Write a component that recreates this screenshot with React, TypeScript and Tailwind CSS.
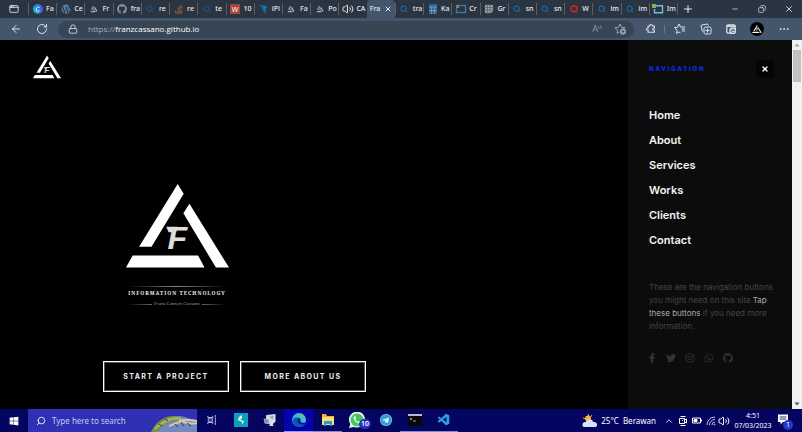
import React, { ReactNode } from "react";
import {
  FaFacebookF, FaGithub, FaInstagram, FaStackOverflow, FaTelegram, FaTwitter,
  FaWhatsapp, FaWindows, FaWordpress,
} from "react-icons/fa";
import { VscVscode } from "react-icons/vsc";
import {
  AppWindow, ArrowLeft, ChevronUp, Copy, Lock, Minus,
  MoreHorizontal, Plus, RotateCw, Search, Volume2, X,
} from "lucide-react";

const ui = "font-['Noto_Sans','Open_Sans',sans-serif]";

function Mark({ className }: { className: string }) {
  return (
    <svg viewBox="108 43 307 250" className={className} fill="#fff" aria-hidden="true">
      <polygon points="262,43 280,72 184,230 147,230" />
      <polygon points="297,102 415,292 376,292 279,130" />
      <polygon points="128,256 323,256 342,292 108,292" />
      <g fill="#ddd">
        <path d="M228 170h34l-5 17h-22z" />
        <text x="232" y="238" fontFamily="Liberation Sans, sans-serif" fontSize="96" fontWeight="bold" fontStyle="italic">F</text>
      </g>
    </svg>
  );
}

function Triangle() {
  return (
    <svg viewBox="0 0 10 10" className="size-2" fill="none" stroke="#a9b1b9" strokeWidth="1.5">
      <path d="M4.5 1.5 2 6M5.8 3l3 5.2M1 8.3h6M5 4.8v2" />
    </svg>
  );
}

const search = <Search className="size-2 text-[#0b78c8]" strokeWidth={3} />;
const dimSearch = <Search className="size-2 text-[#135a94]" strokeWidth={3} />;
const frame = (
  <svg viewBox="0 0 12 10" className="h-2.5 w-3" fill="none" stroke="#3f769c">
    <path d="M3.5 1.5h7v7h-9V4" strokeWidth="1.4" />
    <path d="M1 1h3v3H1z" fill="#8a8058" stroke="none" />
  </svg>
);

const tabs: { icon: ReactNode; title: string }[] = [
  {
    icon: (
      <svg viewBox="0 0 10 10" className="size-2.5">
        <defs>
          <linearGradient id="canva" x1="0" y1="0.6" x2="1" y2="0.3">
            <stop offset="0" stopColor="#12bcd5" /><stop offset=".55" stopColor="#247ee8" /><stop offset="1" stopColor="#7636e4" />
          </linearGradient>
        </defs>
        <circle cx="5" cy="5" r="5" fill="url(#canva)" />
        <path d="M6.6 3.5C5.8 1.9 3.2 3.6 3.3 6c.1 2 2.4 1.8 3.3.4" fill="none" stroke="#fff" />
      </svg>
    ),
    title: "Fa",
  },
  { icon: <FaWordpress className="size-2.5 text-[#5289ad]" />, title: "Ce" },
  { icon: <Triangle />, title: "Fr" },
  { icon: <FaGithub className="size-2.5 text-[#8d969f]" />, title: "fra" },
  { icon: dimSearch, title: "re" },
  { icon: <FaStackOverflow className="size-2.5 text-[#98613b]" />, title: "re" },
  { icon: dimSearch, title: "te" },
  { icon: <span className="flex size-2.5 items-center justify-center bg-[#a94440] text-[7px] leading-none text-white">W</span>, title: "10" },
  {
    icon: (
      <svg viewBox="0 0 10 10" className="size-2.5" fill="#1672b0">
        <path d="M0 1.200 7 1.500 10 4 7.800 4.500 7.700 9.500 4.600 6.500 5.500 4.600 2.500 4.200 5 3.300z" />
      </svg>
    ),
    title: "iPi",
  },
  { icon: <Triangle />, title: "Fa" },
  { icon: <Triangle />, title: "Po" },
  { icon: <Volume2 className="size-3 text-[#dde2e7]" />, title: "CA" },
  { icon: null, title: "Fra" },
  { icon: search, title: "tra" },
  {
    icon: (
      <svg viewBox="0 0 10 10" className="size-2.5">
        <path d="M1 0h8v10H1z" fill="#2f6594" />
        <path d="M1 3h8M1 6.500h8M3.500 3v7M6.500 3v7" stroke="#86a9c4" strokeWidth=".7" />
      </svg>
    ),
    title: "Ka",
  },
  { icon: frame, title: "Cr" },
  {
    icon: (
      <svg viewBox="0 0 10 10" className="size-2.5">
        <path d="M1 1h8v6L7 9H1z" fill="#9a9fa4" />
        <path d="M0 3.500h10M0 6.200h10M3.500 0v10M6.200 0v10" stroke="#59636e" strokeWidth=".8" />
      </svg>
    ),
    title: "Gr",
  },
  { icon: search, title: "sn" },
  { icon: search, title: "sn" },
  {
    icon: (
      <svg viewBox="0 0 10 10" className="size-2" fill="none" stroke="#cf2626" strokeWidth="1.800">
        <circle cx="5" cy="4.800" r="3.800" /><path d="m6 7 2.500 2.500" />
      </svg>
    ),
    title: "W",
  },
  { icon: search, title: "im" },
  { icon: search, title: "im" },
  {
    icon: (
      <svg viewBox="0 0 12 10" className="h-2.5 w-3" fill="none">
        <path d="M4 1.700h6.500v7h-8V5" stroke="#72bde0" strokeWidth="1.400" />
        <path d="M0 0h4v4H0z" fill="#90a950" />
      </svg>
    ),
    title: "Im",
  },
];

function TabStrip() {
  return (
    <div className="flex h-[18px] items-stretch bg-[#2b3542] text-[#e8ebee]">
      <button aria-label="Tab actions" className="flex w-7 items-center justify-center">
        <AppWindow className="size-2.5" />
      </button>
      <div className="flex min-w-0 flex-1" role="tablist">
        {tabs.map((tab, i) =>
          tab.icon === null ? (
            <div key={i} className="flex min-w-0 flex-1 basis-0 items-center justify-evenly rounded-t bg-[#44566c]">
              <button role="tab" aria-selected="true" className="text-[7px] leading-3 font-medium whitespace-nowrap">{tab.title}</button>
              <button aria-label="Close tab"><X className="size-2" strokeWidth={3} /></button>
            </div>
          ) : (
            <button key={i} role="tab" aria-selected="false" className="flex min-w-0 flex-1 basis-0 items-center">
              <span className="h-3 w-px shrink-0 bg-[#56606c]" />
              <span className="flex w-[17px] shrink-0 items-center justify-center">{tab.icon}</span>
              <span className="text-[7px] leading-3 font-medium whitespace-nowrap">{tab.title}</span>
            </button>
          ),
        )}
      </div>
      <div className="flex w-[125px] items-center">
        <span className="h-3 w-px bg-[#56606c]" />
        <button aria-label="New tab" className="ml-1"><Plus className="size-3" /></button>
        <button aria-label="Minimize" className="ml-auto flex w-[27px] justify-center"><Minus className="size-2" /></button>
        <button aria-label="Restore" className="flex w-[27px] justify-center"><Copy className="size-2 -scale-x-100" /></button>
        <button aria-label="Close" className="flex w-[27px] justify-center"><X className="size-2.5" /></button>
      </div>
    </div>
  );
}

function Toolbar() {
  return (
    <div className="flex h-[22px] items-center bg-[#44566c] text-[#dce2e8]">
      <button aria-label="Back" className="ml-2.5"><ArrowLeft className="size-3" /></button>
      <button aria-label="Reload" className="ml-3.5"><RotateCw className="size-3" /></button>
      <div className="ml-2.5 flex h-[17px] min-w-0 flex-1 items-center rounded-full bg-[#384555] pr-2 pl-2.5">
        <Lock className="size-2.5" />
        <label className="relative ml-2.5 flex h-full flex-1 items-center font-['Open_Sans',sans-serif] text-[8px] leading-3">
          <span className="text-[#a5aeb8]">https://</span>
          <span className="text-white">franzcassano.github.io</span>
          <input aria-label="Address" className="absolute inset-0 w-full bg-transparent outline-none" />
        </label>
        <button aria-label="Read aloud" className="flex items-start text-[9px] leading-3 text-[#8c97a3]">
          A
          <svg viewBox="0 0 5 6" className="mt-0.5 h-1.5 w-1" fill="none" stroke="currentColor"><path d="m.5 1 1 3M3 0l1 4" /></svg>
        </button>
        <button aria-label="Add to favorites" className="ml-3 text-[#98a2ad]">
          <svg viewBox="0 0 24 24" className="size-3" fill="none" stroke="currentColor" strokeWidth="2">
            <path d="m12 2-3 6.500-7 .8 5 5L6 21l5-3M12 2l3 6.500 7 .8-2 2" />
            <circle cx="18" cy="17" r="5.500" fill="currentColor" /><path d="M18 14.500v5M15.500 17h5" stroke="#384555" />
          </svg>
        </button>
      </div>
      <div className="flex w-[168px] items-center pl-3">
        <button aria-label="Extensions">
          <svg viewBox="0 0 24 24" className="size-2.5" fill="none" stroke="currentColor" strokeWidth="2.500">
            <path d="M5 5h4c-1-5 7-5 6 0h5v5c-5-1-5 6 0 5v5H5v-5c-5 1-5-6 0-5z" />
          </svg>
        </button>
        <span className="ml-2 h-2 w-px bg-[#6a7989]" />
        <button aria-label="Favorites" className="ml-[9px]">
          <svg viewBox="0 0 24 24" className="size-3" fill="none" stroke="currentColor" strokeWidth="2">
            <path d="m10 2-3 6.500-6 .8 5 5L5 21l5-3 3 1.500M10 2l3 6h9M15 12h7M16 16h6" />
          </svg>
        </button>
        <button aria-label="Collections" className="ml-3.5">
          <svg viewBox="0 0 24 24" className="size-3" fill="none" stroke="currentColor" strokeWidth="2">
            <rect x="8" y="8" width="14" height="14" rx="3" /><path d="M15 11v8M11 15h8M5 17 2 6l1-2 12-2 2 3" />
          </svg>
        </button>
        <button aria-label="Internet Explorer mode" className="ml-3.5">
          <svg viewBox="0 0 12 12" className="size-2.5" fill="none" stroke="currentColor">
            <rect x="1" y="1" width="10" height="10" rx="1.500" strokeWidth="1.500" /><path d="M1 2.500h10" strokeWidth="2" />
            <circle cx="8" cy="8" r="4" fill="currentColor" stroke="none" />
            <path d="M10.300 9.500C8 11.500 5.700 9.500 6 7.700c.5-2.500 4.300-2 4.300.3H6.500" stroke="#44566c" />
          </svg>
        </button>
        <button aria-label="Profile" className="ml-3.5 flex size-3.5 items-center justify-center rounded-full bg-black"><Mark className="h-2 w-2.5" /></button>
        <button aria-label="Settings and more" className="ml-3.5"><MoreHorizontal className="size-3" /></button>
      </div>
    </div>
  );
}

function Hero() {
  const button =
    "h-[31px] w-[126px] border border-white font-['Inter','Liberation_Sans',sans-serif] text-[7px] leading-3 font-bold tracking-[0.2em] text-[#eee] shadow-[inset_0_0_0_1px_#555]";
  return (
    <main className="min-w-0 flex-1 bg-black">
      <header className="pt-[15px] pl-[33px]">
        <a href="#home" aria-label="Home" className="block w-7"><Mark className="h-6 w-7" /></a>
      </header>
      <section className="mt-[105px] ml-[103px]">
        <div className="flex w-[148px] flex-col items-center">
          <Mark className="h-[84px] w-[103px]" />
          <span className="mt-[18px] h-px w-[98px] bg-linear-to-r from-transparent via-[#888] to-transparent" />
          <p className="mt-px font-['Noto_Serif','Liberation_Serif',serif] text-[5px] leading-[10px] font-bold tracking-[1px] whitespace-nowrap text-[#eee]">INFORMATION TECHNOLOGY</p>
          <div className="flex w-[98px] items-center gap-0.5">
            <span className="h-px flex-1 bg-linear-to-r from-transparent to-[#666]" />
            <p className="font-['Liberation_Serif',serif] text-[5px] leading-3 whitespace-nowrap text-[#999] italic">Franz Lennon Cassano</p>
            <span className="h-px flex-1 bg-linear-to-l from-transparent to-[#666]" />
          </div>
        </div>
        <div className="mt-[51px] flex gap-[11px]">
          <button className={button}>START A PROJECT</button>
          <button className={button}>MORE ABOUT US</button>
        </div>
      </section>
    </main>
  );
}

const socials = [
  { name: "Facebook", Icon: FaFacebookF },
  { name: "Twitter", Icon: FaTwitter },
  { name: "Instagram", Icon: FaInstagram },
  { name: "WhatsApp", Icon: FaWhatsapp },
  { name: "GitHub", Icon: FaGithub },
];

function Sidebar() {
  return (
    <aside className="w-[164px] shrink-0 bg-[#0c0c0c] pt-5 pr-4 pl-[21px] font-['Inter','Liberation_Sans',sans-serif]">
      <div className="flex items-center justify-between pr-0.5">
        <h2 className="text-[6px] leading-3 font-extrabold tracking-[0.3em] text-[#0b2bea]">NAVIGATION</h2>
        <button aria-label="Close navigation" className="flex size-[18px] items-center justify-center rounded-sm bg-[#050505] text-white"><X className="size-2" strokeWidth={4} /></button>
      </div>
      <nav className="mt-6 flex flex-col">
        {["Home", "About", "Services", "Works", "Clients", "Contact"].map((name) => (
          <a key={name} href={"#" + name.toLowerCase()} className="flex h-[25px] items-center text-[11px] leading-4 font-semibold text-[#f4f4f4]">{name}</a>
        ))}
      </nav>
      <p className="mt-[29px] text-[8px] leading-[13px] text-[#454545]">
        These are the navigation buttons you might need on this site.<a href="#home" className="text-[#aaa]">Tap these buttons</a> if you need more information.
      </p>
      <div className="mt-5 -ml-0.5 flex gap-[9px] text-[#333]">
        {socials.map(({ name, Icon }) => (
          <a key={name} href={"#" + name} aria-label={name}><Icon className="size-2.5" /></a>
        ))}
      </div>
    </aside>
  );
}

function Scrollbar() {
  return (
    <div className="flex w-2.5 shrink-0 flex-col items-center bg-[#f1f1f1]">
      <svg viewBox="0 0 10 10" className="size-2.5" fill="#a3a3a3"><path d="m5 3.500 2.500 3h-5z" /></svg>
      <div className="h-8 w-2 bg-[#c1c1c1]" />
      <svg viewBox="0 0 10 10" className="mt-auto size-2.5" fill="#505050"><path d="m5 6.500 2.500-3h-5z" /></svg>
    </div>
  );
}

function Taskbar() {
  const app = "flex w-[29px] items-center justify-center border-b";
  return (
    <footer className="flex h-[23px] items-stretch bg-[#040461] text-white">
      <button aria-label="Start" className="flex w-7 items-center justify-center"><FaWindows className="size-2.5" /></button>
      <label className="flex w-[169px] items-center overflow-hidden bg-[#3030b5] pl-2">
        <Search className="size-2.5 shrink-0 -scale-x-100" />
        <input type="text" aria-label="Search" placeholder="Type here to search" className="ml-1.5 w-24 min-w-0 bg-transparent text-[8px] leading-4 outline-none placeholder:text-[#c8c8ee]" />
        <svg viewBox="0 0 46 23" className="ml-auto h-[23px] w-[46px] shrink-0">
          <path d="M0 23C8 13 17 6 29 7c7 1 12 4 17 4v12z" fill="#7188c1" />
          <path d="M0 23C5 12 14 6 26 7l6 3c-9 0-19 3-26 13z" fill="#769044" />
          <path d="M9 16c7-6 14-8 21-6M4 20c5-5 9-8 15-9" stroke="#b4ba4d" strokeWidth="2" fill="none" />
          <path d="M18 17c5-1 7-4 12-4 7 0 9 3 16 1M28 12c6-2 12-1 18 0" stroke="#d6c9a4" strokeWidth="2" fill="none" />
          <path d="m24 15 3 3m3-5 3 4m3-3 4 3M8 15l3 2m3-7 3 2" stroke="#30345a" />
        </svg>
      </label>
      <div className="flex">
        <button aria-label="Task view" className={app + " border-transparent"}>
          <svg viewBox="0 0 12 12" className="size-2.5" fill="none" stroke="#d8d8ef"><path d="M1 1v2h6V1M1 11V9h6v2M1.500 4.500h5v3h-5zM10 0v3m0 2v7M9 4h2" /></svg>
        </button>
        <button aria-label="Swift" className={app + " border-transparent"}>
          <svg viewBox="0 0 14 14" className="size-3.5"><path d="M0 0h14v14H0z" fill="#06a5b9" /><path d="M8 2v3L6 7l4 1-2 4V9L4 7l1-3z" fill="#fff" /></svg>
        </button>
        <button aria-label="Utility" className={app + " border-transparent"}>
          <svg viewBox="0 0 14 13" className="h-3 w-3.5"><path d="m3 1 10-1v8l-3 3 1 2H6l1-2-5-1z" fill="#d6dce5" /><path d="m0 5 6 1v5L1 10zM6 3l5-1-1 4" fill="#9aa6b8" /><path d="m2 7 2 1" stroke="#455" /></svg>
        </button>
        <button aria-label="Microsoft Edge" className={app + " border-[#8f9df0] bg-[#0202b0]"}>
          <svg viewBox="0 0 16 16" className="size-3.5">
            <defs><linearGradient id="edge" x1="0" y1="1" x2="1" y2="0"><stop stopColor="#107bd3" /><stop offset=".5" stopColor="#27b9df" /><stop offset="1" stopColor="#69dc66" /></linearGradient></defs>
            <circle cx="8" cy="8" r="8" fill="url(#edge)" />
            <path d="M15.500 11C13 13 8 12 8 9c0-1.500 1-2 1-2 0-2-4-3-7-.500C-1 11 4 17 9 16c3-.500 5-2 6.500-5z" fill="#1457a7" />
            <path d="M15.600 10.500C13 12 9 11 9.500 8.500c.500-1 0-2-1-2.500C6 6 5 10 8 12c2 1.500 5 1.500 6.500.5z" fill="#0909b0" />
          </svg>
        </button>
        <button aria-label="File Explorer" className={app + " border-[#8888d8]"}>
          <svg viewBox="0 0 14 12" className="h-3 w-3.5"><path d="M1 0h4l1 2h7v9H1z" fill="#f6b332" /><path d="M1 3h12v8H1z" fill="#ffdb73" /><path d="M3 7h8v5H9v-2H5v2H3z" fill="#279bda" /></svg>
        </button>
        <button aria-label="WhatsApp, 10 messages" className={app + " relative border-transparent"}>
          <svg viewBox="0 0 16 16" className="size-4">
            <path d="m0 16 1.300-4A8 8 0 1 1 5 15z" fill="#eee" /><circle cx="8" cy="8" r="6.500" fill="#3fcd57" />
            <path d="M5 4.500c-1 1 0 3.500 1.500 5s4 2.500 5 1.500l.5-1-2-1-1 1C8 9.500 6.500 8 6.500 7l.7-1-.9-1.800z" fill="#fff" />
          </svg>
          <span className="absolute right-0 bottom-0.5 rounded-full bg-[#2c2cc2] px-0.5 text-[7px] leading-[10px] font-semibold">10</span>
        </button>
        <button aria-label="Telegram" className={app + " border-transparent"}>
          <span className="flex size-3 items-center justify-center rounded-full bg-white"><FaTelegram className="size-3 text-[#2b9fda]" /></span>
        </button>
        <button aria-label="Command Prompt" className={app + " border-[#8888d8]"}>
          <svg viewBox="0 0 14 12" className="h-3 w-3.5"><path d="M0 0h14v12H0z" fill="#080808" /><path d="M0 0h14v2H0z" fill="#bbb" /><path d="m2 4 2 1-2 1m3 1h3" stroke="#ccc" fill="none" strokeWidth=".8" /></svg>
        </button>
        <button aria-label="Visual Studio Code" className={app + " border-[#8888d8]"}><VscVscode className="size-3.5 text-[#279ee5]" /></button>
      </div>
      <div className="ml-auto flex items-center">
        <svg viewBox="0 0 15 13" className="h-[13px] w-[15px]"><circle cx="6" cy="4.500" r="3" fill="#ffad28" /><path d="m6 0 1 3M1 4l3 1M10 1 8 4" stroke="#ffad28" /><path d="M3 13C-1 13 0 7 4 8c1-4 7-3 7 0 5-1 5 5 2 5z" fill="#d4e3fb" /></svg>
        <span className="ml-1 text-[8px] leading-3">25°C</span>
        <span className="ml-1 text-[8px] leading-3">Berawan</span>
        <button aria-label="Show hidden icons" className="ml-2"><ChevronUp className="size-2.5" /></button>
        <svg viewBox="0 0 10 12" className="ml-1 h-3 w-2.5" fill="none" stroke="white"><path d="M2.500 1.500h5M2.500 10.500h5M1.500 3.500h5v5h-5zM6.500 5l2-1v4l-2-1M4 5.500h1" /></svg>
        <svg viewBox="0 0 10 7" className="ml-1 h-[7px] w-2.5" fill="none" stroke="white"><path d="M.5 1h8v5h-8zM9.500 2.500v2" /><path d="M2 2.500h3v2H2z" fill="white" /></svg>
        <svg viewBox="0 0 10 10" className="ml-1 size-2.5" fill="none" stroke="#bbbbe0"><path d="M1 9A8 8 0 0 1 9 1M3.500 9A5.500 5.500 0 0 1 9 3.500M6 9a3 3 0 0 1 3-3" /><circle cx="8.500" cy="8.500" r=".5" /></svg>
        <Volume2 className="ml-0.5 size-3" />
        <div className="ml-1 flex w-[38px] flex-col items-center text-[7px] leading-[10px] whitespace-nowrap"><time>4:51</time><time>07/03/2023</time></div>
        <button aria-label="1 notification" className="relative mr-2.5 ml-1.5 flex size-3.5 items-start">
          <svg viewBox="0 0 12 12" className="h-[11px] w-2.5"><path d="M0 0h12v9H6l-3 3V9H0z" fill="#fff" /><path d="M2 3h8M2 5.500h8" stroke="#040461" /></svg>
          <span className="absolute -right-px -bottom-0.5 flex size-2.5 items-center justify-center rounded-full bg-[#2437d1] text-[7px] leading-none">1</span>
        </button>
      </div>
    </footer>
  );
}

export default function App() {
  return (
    <div className={"flex h-screen flex-col overflow-hidden bg-black " + ui}>
      <TabStrip />
      <Toolbar />
      <div className="flex min-h-0 flex-1">
        <Hero />
        <Sidebar />
        <Scrollbar />
      </div>
      <Taskbar />
    </div>
  );
}
